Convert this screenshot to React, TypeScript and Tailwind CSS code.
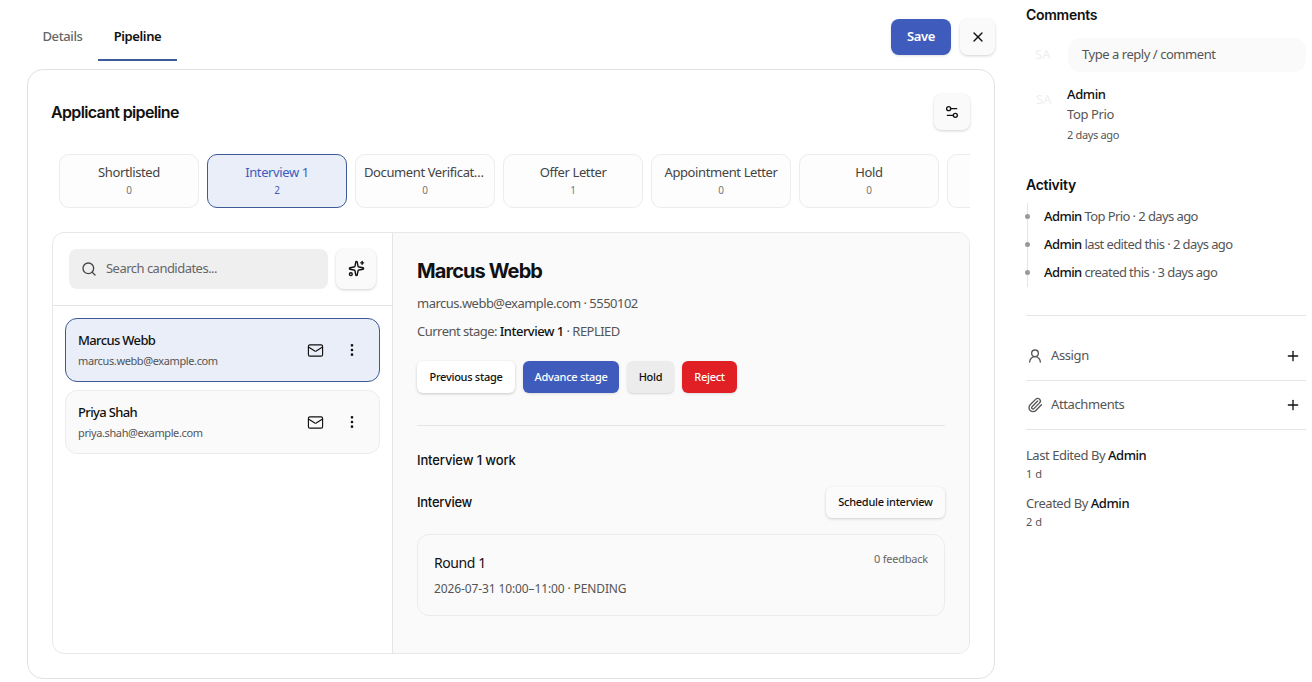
import { EllipsisVertical, Mail, Paperclip, Plus, Search, Settings2, Sparkles, UserRound, X } from "lucide-react";

const stages = [
  { name: "Shortlisted", count: 0 },
  { name: "Interview 1", count: 2, active: true },
  { name: "Document Verification", count: 0 },
  { name: "Offer Letter", count: 1 },
  { name: "Appointment Letter", count: 0 },
  { name: "Hold", count: 0 },
  { name: "", count: "" },
];

const candidates = [
  { name: "Marcus Webb", email: "marcus.webb@example.com", active: true },
  { name: "Priya Shah", email: "priya.shah@example.com" },
];

const activity = [
  { text: "Top Prio · 2 days ago" },
  { text: "last edited this · 2 days ago" },
  { text: "created this · 3 days ago" },
];

export default function App() {
  return (
    <div className="flex h-[682px] w-[1312px] overflow-hidden bg-white font-['Noto_Sans',sans-serif] text-[#111]">
      {/* Left side */}
      <div className="ml-[27px] flex w-[968px] shrink-0 flex-col">
        {/* Tabs */}
        <div className="flex h-[69px] shrink-0 items-start justify-between">
          <div className="mt-[12px] flex h-[49px] text-[13px] font-medium tracking-[-0.03em]">
            <div className="flex w-[71px] items-center justify-center pt-px text-[#666]">Details</div>
            <div className="flex w-[79px] items-center justify-center border-b-2 border-[#3d5a99] pt-[2px] font-semibold">Pipeline</div>
          </div>
          <div className="mt-[19px] flex gap-[9px]">
            <button className="h-9 w-[60px] rounded-lg bg-[#3f5cbd] text-[13px] font-semibold tracking-[-0.03em] text-white shadow-sm">Save</button>
            <button className="flex h-9 w-[35px] items-center justify-center rounded-lg bg-[#fafafa] shadow-[0_1px_3px_rgba(0,0,0,0.18)]">
              <X size={16} />
            </button>
          </div>
        </div>

        {/* Pipeline card */}
        <div className="h-[610px] shrink-0 rounded-2xl border border-[#e2e2e2] pl-[23px] pr-6 pt-[24px]">
          <div className="flex h-9 items-center justify-between">
            <h2 className="pb-px font-['Inter',sans-serif] text-[16px] font-semibold tracking-[-0.04em]">Applicant pipeline</h2>
            <button className="flex h-9 w-9 items-center justify-center rounded-lg bg-[#fafafa] shadow-[0_1px_3px_rgba(0,0,0,0.18)]">
              <Settings2 size={16} />
            </button>
          </div>

          {/* Stages */}
          <div className="mt-6 flex gap-2 overflow-hidden px-2">
            {stages.map((s, i) => (
              <div
                key={i}
                className={`flex h-[54px] w-[140px] shrink-0 flex-col items-center justify-center rounded-[10px] border px-2 ${
                  s.active ? "border-[#3d5a99] bg-[#e9eef9] text-[#3f5cbd]" : "border-[#ececec] bg-[#fdfdfd] text-[#444]"
                }`}
              >
                <span className="w-full truncate text-center text-[13px] leading-[18px] tracking-[-0.03em]">{s.name}</span>
                <span className={`text-[10px] leading-[18px] ${s.active ? "text-[#3f5cbd]" : "text-[#777]"}`}>{s.count}</span>
              </div>
            ))}
          </div>

          {/* Split panel */}
          <div className="ml-px mt-6 flex h-[422px] overflow-hidden rounded-xl border border-[#e8e8e8]">
            {/* Candidates */}
            <div className="flex w-[340px] shrink-0 flex-col border-r border-[#e5e5e5]">
              <div className="flex h-[73px] shrink-0 items-center gap-2 border-b border-[#e5e5e5] pb-px pl-[16px]">
                <div className="flex h-10 w-[259px] items-center gap-[9px] rounded-lg bg-[#efefef] px-3 text-[13px] tracking-[-0.04em] text-[#666]">
                  <Search size={16} className="text-[#444]" />
                  Search candidates...
                </div>
                <button className="flex h-10 w-10 items-center justify-center rounded-lg bg-[#fafafa] shadow-[0_1px_3px_rgba(0,0,0,0.18)]">
                  <Sparkles size={17} />
                </button>
              </div>
              <div className="flex flex-col gap-2 pl-3 pr-3 pt-3">
                {candidates.map((c) => (
                  <div
                    key={c.name}
                    className={`flex h-16 items-center rounded-xl border pl-3 pr-[19px] ${
                      c.active ? "border-[#3d5a99] bg-[#e9eef9]" : "border-[#ececec] bg-[#fafafa]"
                    }`}
                  >
                    <div className="min-w-0 flex-1">
                      <div className="text-[13px] font-medium leading-[20px] tracking-[-0.05em]">{c.name}</div>
                      <div className="mt-px text-[11px] leading-[20px] tracking-[-0.035em] text-[#555]">{c.email}</div>
                    </div>
                    <Mail size={17} strokeWidth={1.6} />
                    <EllipsisVertical size={16} className="ml-[20px]" />
                  </div>
                ))}
              </div>
            </div>

            {/* Detail */}
            <div className="flex-1 bg-[#fafafa] px-6 pt-[22px]">
              <h1 className="font-['Inter',sans-serif] text-[20px] font-bold leading-[32px] tracking-[-0.045em]">Marcus Webb</h1>
              <p className="mt-[6px] text-[13px] leading-5 tracking-[-0.04em] text-[#555]">marcus.webb@example.com · 5550102</p>
              <p className="mt-2 text-[13px] leading-5 tracking-[-0.04em] text-[#555]">
                Current stage: <span className="font-medium text-[#111]">Interview 1</span> · REPLIED
              </p>
              <div className="mt-[20px] flex gap-2 text-[11px] font-medium tracking-[-0.025em]">
                <button className="h-8 w-[98px] rounded-md bg-white shadow-[0_1px_3px_rgba(0,0,0,0.2)]">Previous stage</button>
                <button className="h-8 w-[96px] rounded-md bg-[#3f5cbd] text-white shadow-sm">Advance stage</button>
                <button className="h-8 w-[47px] rounded-md bg-[#ececec] shadow-[0_1px_2px_rgba(0,0,0,0.15)]">Hold</button>
                <button className="h-8 w-[55px] rounded-md bg-[#e02024] text-white shadow-sm">Reject</button>
              </div>
              <div className="mt-[32px] border-t border-[#e5e5e5]" />
              <h3 className="mt-[24px] font-['Inter',sans-serif] text-[13px] font-medium leading-5 tracking-[-0.01em]">Interview 1 work</h3>
              <div className="mt-[17px] flex h-[31px] items-center justify-between">
                <h4 className="font-['Inter',sans-serif] text-[13px] font-medium tracking-[-0.02em]">Interview</h4>
                <button className="h-[31px] w-[119px] rounded-md bg-[#fbfbfb] text-[11px] font-medium tracking-[-0.025em] shadow-[0_1px_3px_rgba(0,0,0,0.18)]">Schedule interview</button>
              </div>
              <div className="mt-4 flex h-[82px] items-start justify-between rounded-xl border border-[#ececec] bg-[#fafafa] px-4 pt-[18px]">
                <div>
                  <div className="text-[14px] leading-5 tracking-[-0.03em]">Round 1</div>
                  <div className="mt-[6px] text-[12px] leading-5 tracking-[-0.01em] text-[#555]">2026-07-31 10:00–11:00 · PENDING</div>
                </div>
                <div className="-mt-[2px] text-[11px] leading-4 tracking-[-0.02em] text-[#666]">0 feedback</div>
              </div>
            </div>
          </div>
        </div>
      </div>

      {/* Right side */}
      <div className="ml-[31px] w-[280px] shrink-0">
        <h3 className="mt-[6px] font-['Inter',sans-serif] text-[14px] font-semibold leading-[18px] tracking-[-0.02em]">Comments</h3>
        <div className="mt-[14px] flex items-center">
          <div className="w-[42px] pl-[9px] text-[13px] text-[#efefef]">SA</div>
          <div className="flex h-[34px] flex-1 items-center rounded-xl bg-[#fafafa] px-[14px] text-[13px] tracking-[-0.035em] text-[#555]">Type a reply / comment</div>
        </div>
        <div className="mt-[12px] flex">
          <div className="w-[41px] pl-[10px] pt-[6px] text-[13px] text-[#efefef]">SA</div>
          <div>
            <div className="text-[13px] font-medium leading-[20px] tracking-[-0.03em]">Admin</div>
            <div className="text-[13px] leading-[20px] tracking-[-0.03em] text-[#555]">Top Prio</div>
            <div className="mt-[1px] text-[11px] leading-[20px] tracking-[-0.03em] text-[#555]">2 days ago</div>
          </div>
        </div>

        <h3 className="mt-[31px] font-['Inter',sans-serif] text-[14px] font-semibold leading-[18px] tracking-[-0.02em]">Activity</h3>
        <div className="ml-px mt-[9px] flex flex-col border-l border-[#e5e5e5]">
          {activity.map((a) => (
            <div key={a.text} className="relative flex h-7 items-center pl-4 text-[13px] tracking-[-0.045em] text-[#555]">
              <span className="absolute left-[-3px] top-[11px] h-[5px] w-[5px] rounded-full bg-[#999]" />
              <span>
                <span className="font-medium text-[#111]">Admin</span> {a.text}
              </span>
            </div>
          ))}
        </div>

        <div className="mt-[28px] border-t border-[#e5e5e5]" />
        <div className="mt-4 flex h-[49px] items-center justify-between border-b border-[#e5e5e5] pl-px pr-[5px] text-[13px] tracking-[-0.03em] text-[#555]">
          <span className="flex items-center gap-2">
            <UserRound size={16} />
            Assign
          </span>
          <Plus size={16} className="text-[#111]" />
        </div>
        <div className="flex h-[49px] items-center justify-between border-b border-[#e5e5e5] pl-px pr-[5px] text-[13px] tracking-[-0.03em] text-[#555]">
          <span className="flex items-center gap-2">
            <Paperclip size={16} />
            Attachments
          </span>
          <Plus size={16} className="text-[#111]" />
        </div>
        <div className="mt-[15px] text-[13px] leading-5 tracking-[-0.035em] text-[#555]">
          Last Edited By <span className="font-medium text-[#111]">Admin</span>
        </div>
        <div className="text-[11px] leading-[18px] text-[#555]">1 d</div>
        <div className="mt-[10px] text-[13px] leading-5 tracking-[-0.035em] text-[#555]">
          Created By <span className="font-medium text-[#111]">Admin</span>
        </div>
        <div className="text-[11px] leading-[18px] text-[#555]">2 d</div>
      </div>
    </div>
  );
}
